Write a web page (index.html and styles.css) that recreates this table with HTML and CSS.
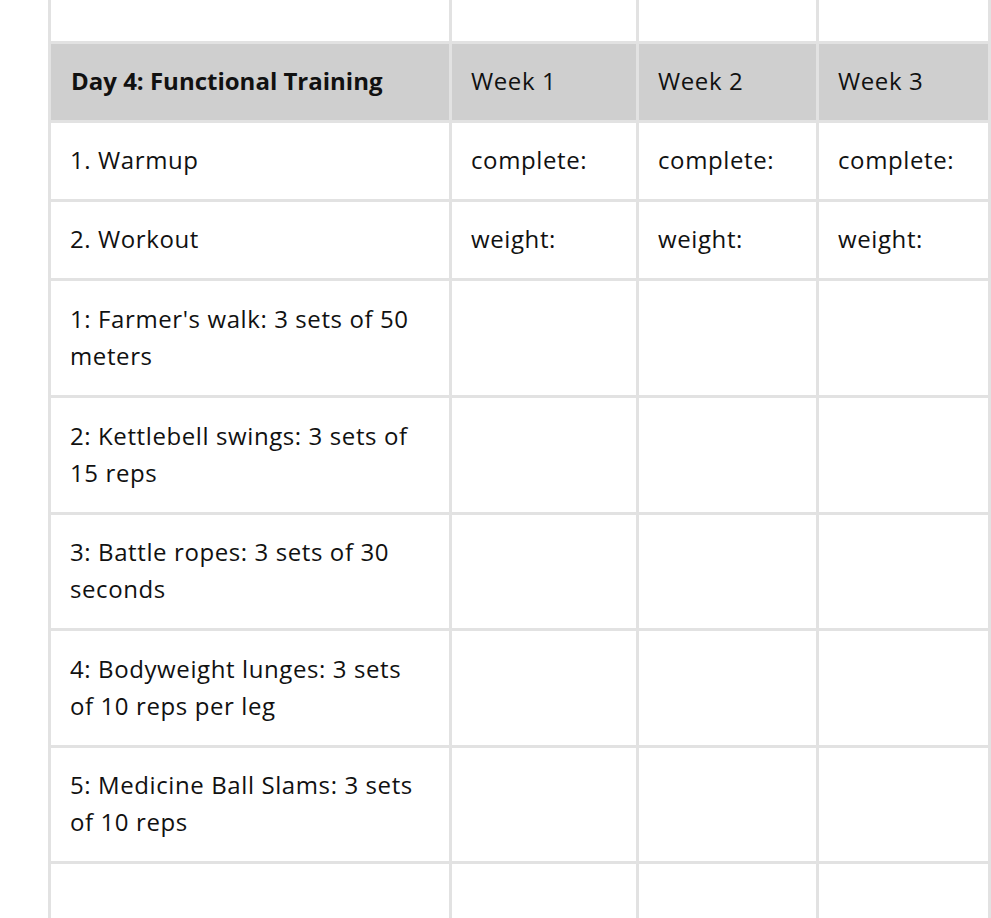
FILE: index.html
```html
<!DOCTYPE html>
<html lang="en">
<head>
<meta charset="utf-8">
<title>Day 4: Functional Training</title>
<link rel="stylesheet" href="styles.css">
</head>
<body>
<div class="sheet">
  <div class="cell"></div><div class="cell"></div><div class="cell"></div><div class="cell"></div>

  <div class="cell head title">Day 4: Functional Training</div>
  <div class="cell head">Week 1</div>
  <div class="cell head">Week 2</div>
  <div class="cell head">Week 3</div>

  <div class="cell">1. Warmup</div>
  <div class="cell">complete:</div>
  <div class="cell">complete:</div>
  <div class="cell">complete:</div>

  <div class="cell">2. Workout</div>
  <div class="cell">weight:</div>
  <div class="cell">weight:</div>
  <div class="cell">weight:</div>

  <div class="cell">1: Farmer's walk: 3 sets of 50<br>meters</div>
  <div class="cell"></div><div class="cell"></div><div class="cell"></div>

  <div class="cell">2: Kettlebell swings: 3 sets of<br>15 reps</div>
  <div class="cell"></div><div class="cell"></div><div class="cell"></div>

  <div class="cell">3: Battle ropes: 3 sets of 30<br>seconds</div>
  <div class="cell"></div><div class="cell"></div><div class="cell"></div>

  <div class="cell">4: Bodyweight lunges: 3 sets<br>of 10 reps per leg</div>
  <div class="cell"></div><div class="cell"></div><div class="cell"></div>

  <div class="cell">5: Medicine Ball Slams: 3 sets<br>of 10 reps</div>
  <div class="cell"></div><div class="cell"></div><div class="cell"></div>

  <div class="cell"></div><div class="cell"></div><div class="cell"></div><div class="cell"></div>
</div>
</body>
</html>
```

FILE: styles.css
```css
html, body {
  margin: 0;
  padding: 0;
  background: #ffffff;
  overflow: hidden;
}

body {
  height: 918px;
}

.sheet {
  margin-left: 48px;
  width: 943px;
  box-sizing: border-box;
  display: grid;
  grid-template-columns: 398px 184px 177px 169px;
  grid-template-rows: 41px 76px 76px 76px 114px 114px 113px 114px 113px 60px;
  gap: 3px;
  padding: 0 3px;
  background: #e2e2e2;
  font-family: "Open Sans", "Noto Sans", sans-serif;
  font-size: 24px;
  letter-spacing: 0.6px;
  line-height: 37px;
  color: #111111;
}

.cell {
  background: #ffffff;
  display: flex;
  align-items: center;
  padding: 0 19px 3px;
  white-space: nowrap;
}

.head {
  background: #cfcfcf;
}

.title {
  font-weight: 700;
  letter-spacing: 0;
  padding-left: 20px;
}
```
